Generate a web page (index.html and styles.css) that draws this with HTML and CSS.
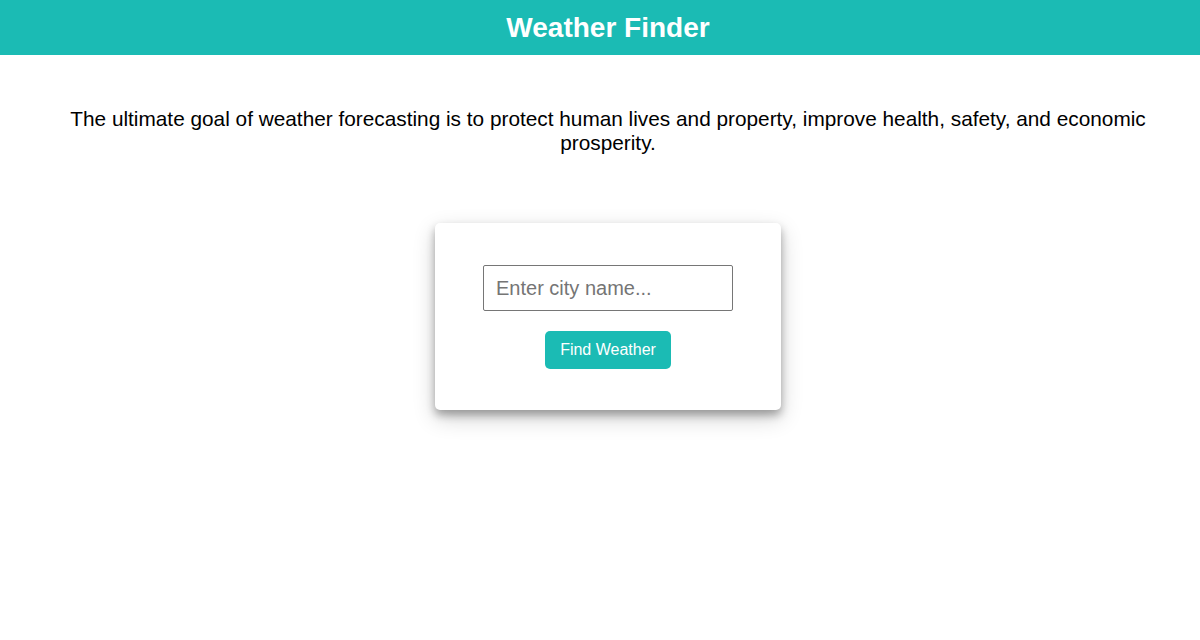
FILE: index.html
```html
<!DOCTYPE html>
<html lang="en">
<head>
<meta charset="utf-8">
<title>Weather Finder</title>
<link rel="stylesheet" href="styles.css">
</head>
<body>
<header class="topbar">
  <h1 class="title">Weather Finder</h1>
</header>
<main class="content">
  <p class="intro">The ultimate goal of weather forecasting is to protect human lives and property, improve health, safety, and economic prosperity.</p>
  <div class="card">
    <input class="city" type="text" placeholder="Enter city name...">
    <button class="find" type="button">Find Weather</button>
  </div>
</main>
</body>
</html>
```
FILE: styles.css
```css
html, body {
  margin: 0;
  padding: 0;
  background: #ffffff;
  font-family: "Liberation Sans", Arial, sans-serif;
}

body {
  min-height: 640px;
}

.topbar {
  background: #1bbbb4;
  height: 55px;
  display: flex;
  align-items: center;
  justify-content: center;
  padding-left: 16px;
}

.title {
  margin: 0;
  color: #ffffff;
  font-size: 28px;
  font-weight: bold;
  line-height: 32px;
}

.content {
  padding: 0 0 80px 16px;
  display: flex;
  flex-direction: column;
  align-items: center;
}

.intro {
  margin: 52px 0 0;
  font-size: 20.8px;
  line-height: 24px;
  text-align: center;
  color: #000000;
  padding: 0 38px;
}

.card {
  margin-top: 68px;
  width: 346px;
  box-sizing: border-box;
  padding: 42px 48px 41px;
  background: #ffffff;
  border-radius: 5px;
  box-shadow: 0 5px 8px rgba(0, 0, 0, 0.3), 0 8px 22px rgba(0, 0, 0, 0.19);
  display: flex;
  flex-direction: column;
  align-items: center;
  gap: 20px;
}

.city {
  width: 250px;
  height: 46px;
  box-sizing: border-box;
  border: 1px solid #767676;
  border-radius: 2px;
  padding: 0 12px;
  font-family: "Liberation Sans", Arial, sans-serif;
  font-size: 20px;
  color: #333333;
  margin: 0;
}

.city::placeholder {
  color: #757575;
}

.find {
  height: 38px;
  padding: 0 15px;
  border: none;
  border-radius: 5px;
  background: #1bbbb4;
  color: #ffffff;
  font-family: "Liberation Sans", Arial, sans-serif;
  font-size: 16px;
  cursor: pointer;
}
```
